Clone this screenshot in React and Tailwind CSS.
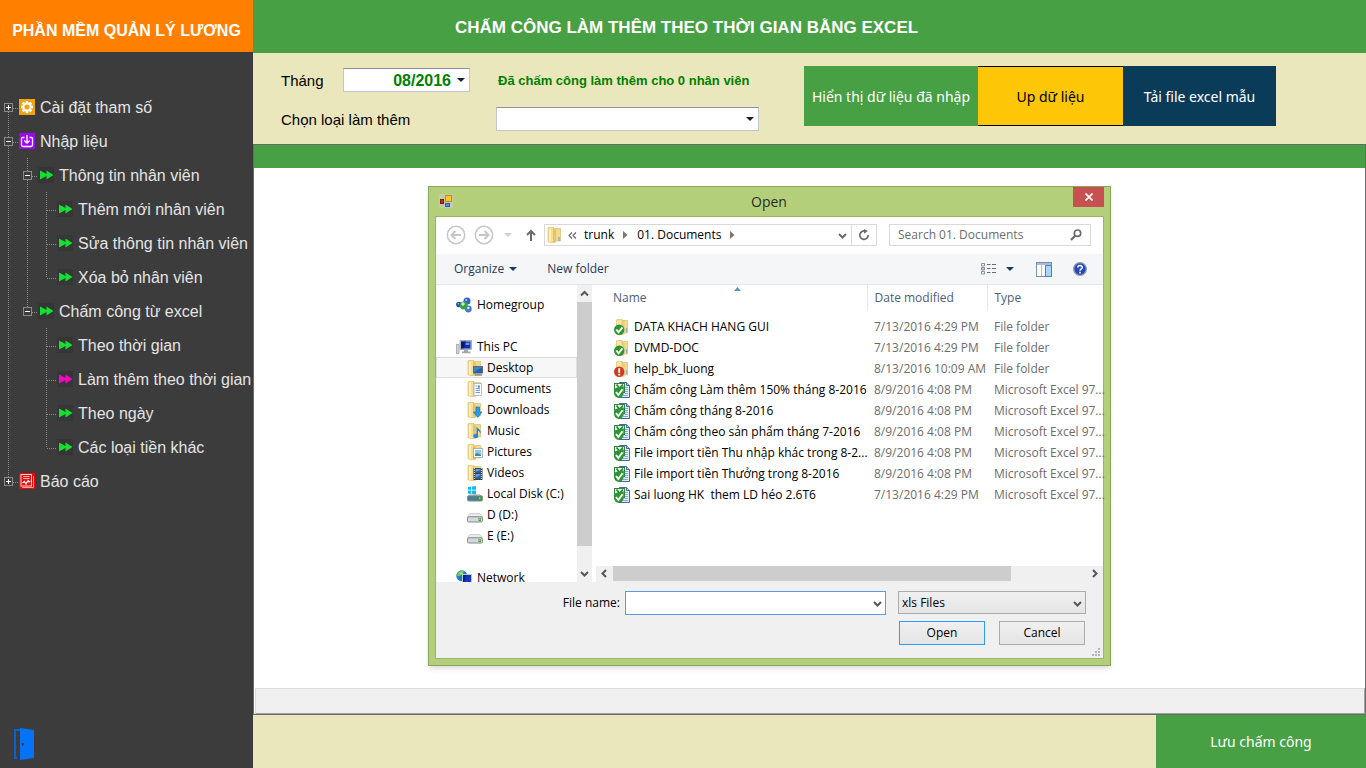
const C = "shrink-0";

/* ---------- sidebar ---------- */

function FastForward({ pink }) {
  return (
    <svg className={C} width="16" height="16" viewBox="0 0 16 16" aria-hidden="true">
      <rect width="16" height="16" fill="#363636" />
      <path d="M2 3.500 8.500 7 8.500 3.500 15.500 8 8.500 12.500 8.500 9 2 12.500z" fill={pink ? "#f908c4" : "#16e02f"} />
    </svg>
  );
}

function GearIcon() {
  return (
    <svg className={C} width="16" height="16" viewBox="0 0 16 16" aria-hidden="true">
      <rect width="16" height="16" fill="#f0a30a" />
      <g fill="#fff">
        <rect x="6.700" y="2" width="2.600" height="12" />
        <rect x="2" y="6.700" width="12" height="2.600" />
        <rect x="6.700" y="2" width="2.600" height="12" transform="rotate(45 8 8)" />
        <rect x="6.700" y="2" width="2.600" height="12" transform="rotate(-45 8 8)" />
        <circle cx="8" cy="8" r="4.600" />
      </g>
      <circle cx="8" cy="8" r="2.600" fill="#f0a30a" />
    </svg>
  );
}

function ImportIcon() {
  return (
    <svg className={C} width="16" height="16" viewBox="0 0 16 16" fill="none" stroke="#fff" strokeWidth="1.300" aria-hidden="true">
      <rect width="16" height="16" fill="#a004f5" stroke="none" />
      <path d="M5.500 4.500H3.500a1 1 0 0 0-1 1V12a1.500 1.500 0 0 0 1.500 1.500h8A1.500 1.500 0 0 0 13.500 12V5.500a1 1 0 0 0-1-1h-2" />
      <path d="M8 2v8M5.300 7.500 8 10.200l2.700-2.700" />
    </svg>
  );
}

function ReportIcon() {
  return (
    <svg className={C} width="16" height="16" viewBox="0 0 16 16" fill="none" aria-hidden="true">
      <rect width="16" height="16" fill="#ee0505" />
      <path d="M3 14.500h11.500V3" stroke="#f9a0a0" />
      <rect x="2" y="1.500" width="10.500" height="11.500" stroke="#ffd9d9" />
      <path d="M4 3.500h6.500M4 5.500h6.500" stroke="#ffb5b5" />
      <path d="m3.500 10 2-1.500L7 11l2-3.500 1 1.500 1.500-1" stroke="#fff" strokeWidth="1.200" />
    </svg>
  );
}

/* One 19px gutter cell of the tree: guide lines and an optional expander box. */
function Guide({ up, down, across, box }) {
  return (
    <svg className={C} width="19" height="34" viewBox="0 0 19 34" aria-hidden="true">
      <g stroke="#8a8a8a" strokeDasharray="1 1">
        {up && <path d="M8.500 0v18" />}
        {down && <path d="M8.500 18v16" />}
        {across && <path d="M9 18.500h10" />}
      </g>
      {box && (
        <g>
          <rect x="4.500" y="13.500" width="8" height="8" fill="#3c3c3c" stroke="#8a8a8a" />
          <path d={box === "plus" ? "M6 17.500h5M8.500 15v5" : "M6 17.500h5"} stroke="#fff" />
        </g>
      )}
    </svg>
  );
}

const line = { up: true, down: true };
const none = {};
const tee = { up: true, down: true, across: true };
const end = { up: true, across: true };

const MENU = [
  { label: "Cài đặt tham số", icon: "gear", guides: [{ down: true, across: true, box: "plus" }] },
  { label: "Nhập liệu", icon: "import", guides: [{ ...tee, box: "minus" }] },
  { label: "Thông tin nhân viên", guides: [line, { ...tee, box: "minus" }] },
  { label: "Thêm mới nhân viên", guides: [line, line, tee] },
  { label: "Sửa thông tin nhân viên", guides: [line, line, tee] },
  { label: "Xóa bỏ nhân viên", guides: [line, line, end] },
  { label: "Chấm công từ excel", guides: [line, { ...end, box: "minus" }] },
  { label: "Theo thời gian", guides: [line, none, tee] },
  { label: "Làm thêm theo thời gian", icon: "current", guides: [line, none, tee] },
  { label: "Theo ngày", guides: [line, none, tee] },
  { label: "Các loại tiền khác", guides: [line, none, end] },
  { label: "Báo cáo", icon: "report", guides: [{ ...end, box: "plus" }] },
];

function MenuIcon({ name }) {
  if (name === "gear") return <GearIcon />;
  if (name === "import") return <ImportIcon />;
  if (name === "report") return <ReportIcon />;
  return <FastForward pink={name === "current"} />;
}

function Sidebar() {
  return (
    <aside className="flex w-[253px] shrink-0 flex-col bg-[#3c3c3c] font-['Liberation_Sans',sans-serif]">
      <div className="flex h-[52px] items-center justify-center bg-[#ff8000] pt-[10px] text-[16px] font-bold whitespace-nowrap text-white">
        PHẦN MỀM QUẢN LÝ LƯƠNG
      </div>
      <nav className="mt-[38px] flex-1">
        <ul>
          {MENU.map((m) => (
            <li key={m.label} className="flex h-[34px] items-center">
              {m.guides.map((g, i) => (
                <Guide key={i} {...g} />
              ))}
              <a href="#" className="flex items-center gap-[5px] text-[16px] whitespace-nowrap text-[#e4e4e4]">
                <MenuIcon name={m.icon} />
                <span className="pt-[2px]">{m.label}</span>
              </a>
            </li>
          ))}
        </ul>
      </nav>
      <button aria-label="Thoát" className="mb-2 ml-[14px] w-5">
        <svg width="20" height="32" viewBox="0 0 20 32" aria-hidden="true">
          <path d="M6 2H1v28h2" fill="none" stroke="#0a62d0" strokeWidth="2" />
          <path d="M6 0l14 2v28L6 32z" fill="#0473f8" />
          <path d="M8 15h1.500v2.500H8z" fill="#20304c" />
        </svg>
      </button>
    </aside>
  );
}

/* ---------- small glyphs ---------- */

function Triangle({ className }) {
  return (
    <svg className={className} width="8" height="4" viewBox="0 0 8 4" aria-hidden="true">
      <path d="M0 0h8L4 4z" fill="currentColor" />
    </svg>
  );
}

const CHEVRONS = {
  up: "M1 6.500 4.500 3 8 6.500",
  down: "M1 3 4.500 6.500 8 3",
  left: "M6 1 2.500 4.500 6 8",
  right: "M3 1l3.500 3.500L3 8",
};

function Chevron({ dir, className }) {
  return (
    <svg className={className} width="9" height="9" viewBox="0 0 9 9" aria-hidden="true">
      <path d={CHEVRONS[dir]} fill="none" stroke="currentColor" strokeWidth="2" />
    </svg>
  );
}

function FolderBase() {
  return (
    <g>
      <path d="M6 1.500h7.500V14H6z" fill="#f3d98b" stroke="#d9b65c" strokeWidth=".6" />
      <path d="M1 .8 6.500 0v16L1 14.800z" fill="#f6dd92" stroke="#d8b45a" strokeWidth=".6" />
      <path d="M2 1.500 4 1.200v13.600l-2-.4z" fill="#fcf0c0" />
      <path d="M6.500 1.500 9 3v12.500L6.500 16z" fill="#e8c469" />
    </g>
  );
}

function PlaceIcon({ kind }) {
  return (
    <svg className={C} width="16" height="16" viewBox="0 0 16 16" aria-hidden="true">
      {["desktop", "documents", "downloads", "music", "pictures", "videos"].includes(kind) && <FolderBase />}
      {kind === "desktop" && (
        <g>
          <rect x="6.500" y="6.500" width="9" height="6.500" fill="#3f84cf" stroke="#5d6b7c" />
          <path d="m7 12 8-5v6H7z" fill="#2862ab" />
          <path d="M8 14.500h7v1H8z" fill="#4b5663" />
        </g>
      )}
      {kind === "documents" && (
        <g>
          <rect x="7" y="2.500" width="7.500" height="12" fill="#fff" stroke="#a9b2bd" strokeWidth=".8" />
          <path d="M8.500 5h2M8.500 7.500h4.500M8.500 9.500h4.500M8.500 11.500h4.500" stroke="#6d9fd8" />
          <path d="M11 4.500h2v2h-2z" fill="#4d88cd" />
        </g>
      )}
      {kind === "downloads" && <path d="M9 5h3.500v5H15l-4.200 5.500L6.500 10H9z" fill="#2a9ce8" stroke="#1a72b8" strokeWidth=".7" />}
      {kind === "music" && (
        <g fill="#2b86d1">
          <path d="M9.500 3c.3 2.500 5.500 3.500 4 8-.3-2-1.500-2.800-2.500-3V13H9.500z" />
          <ellipse cx="8.800" cy="13" rx="2.500" ry="2.200" />
        </g>
      )}
      {kind === "pictures" && (
        <g>
          <rect x="6.500" y="4.500" width="9" height="9" fill="#fff" stroke="#9aa5b0" strokeWidth=".8" />
          <path d="M8 6h6v6H8z" fill="#8fc6ee" />
          <path d="m8 10 2.500-1 3.500 2v1H8z" fill="#3f8e84" />
        </g>
      )}
      {kind === "videos" && (
        <g>
          <rect x="6.500" y="3" width="9" height="12" fill="#3e4044" />
          <path d="M8.500 4h5v4h-5zM8.500 9h5v5h-5z" fill="#5ba2dd" />
          <path d="m8.500 13 5-3v4h-5zM8.500 7l5-2v3h-5z" fill="#2a5d92" />
          <path d="M7.500 3v12M14.500 3v12" stroke="#c5c8cc" strokeDasharray="1 1" />
        </g>
      )}
      {kind === "homegroup" && (
        <g>
          <circle cx="11" cy="4" r="3.500" fill="#3560c4" />
          <circle cx="12.300" cy="12" r="3.400" fill="#4a78ce" />
          <circle cx="2.800" cy="7.500" r="2.700" fill="#2750b5" />
          <circle cx="7.800" cy="8.500" r="4" fill="#39a04a" />
          <circle cx="7" cy="7" r="1.700" fill="#c9efc4" />
          <circle cx="10.300" cy="3" r="1.100" fill="#b5cdf5" />
          <circle cx="12.300" cy="11" r="1.200" fill="#d5e4fb" />
          <circle cx="2.300" cy="6.800" r=".8" fill="#a7c0f0" />
        </g>
      )}
      {kind === "pc" && (
        <g>
          <path d="M.5 5.500h2.500v9H.5z" fill="#d6dade" stroke="#8a9199" strokeWidth=".7" />
          <rect x="4" y="1.500" width="11.500" height="9" fill="#c9ccd0" stroke="#9096a0" strokeWidth=".7" />
          <path d="M5 2.500h9.500v7H5z" fill="#0c2fb4" />
          <path d="M5 2.500h5L7.500 9.500H5z" fill="#081c74" />
          <path d="M9.500 3.500h4v2.500h-4z" fill="#5f93f2" />
          <path d="M8 10.500h4v2H8zM6 12.500h8.500v1.800H6z" fill="#a2a7ad" />
        </g>
      )}
      {kind === "network" && (
        <g>
          <circle cx="5.800" cy="5.800" r="5.500" fill="#1b7fc2" />
          <path d="M2 2.500C4 1 6 .5 8 1L6.500 4 3 6.500 1 5.500zM6 7l3-2 1.500 3L7 11z" fill="#6cd04c" />
          <path d="M4 4c1-1 2-1 3-.5" stroke="#cdf5ff" fill="none" />
          <rect x="6.500" y="4.500" width="9" height="8" fill="#1337b9" stroke="#c2c6cb" />
          <path d="M7 5h3.500L8 12H7z" fill="#0a1f86" />
          <path d="M9 13.500h5v1.500H9z" fill="#a2a7ad" />
        </g>
      )}
      {["local", "disk"].includes(kind) && (
        <g>
          <path d={kind === "disk" ? "M3 6.500h10l2.500 3H.5z" : "M3 8.500h10l2.500 2H.5z"} fill="#e9ebec" stroke="#b7babd" strokeWidth=".6" />
          <rect x=".5" y="9.800" width="15" height="5.200" rx="1.300" fill={kind === "disk" ? "#d6d8da" : "#4d7d8f"} stroke="#868a8e" />
          <path d="M11.500 11h2.500v3h-2.500z" fill="#3aa52c" />
          <path d="M12.300 11.500h1v1.500h-1z" fill="#b8f58e" />
        </g>
      )}
      {kind === "local" && <path d="M1 1 4.300.5v3.300H1zM5 .4 9 0v3.800H5zM1 4.500h3.300V8L1 7.500zM5 4.500h4V8.500L5 8z" fill="#18b9f0" />}
    </svg>
  );
}

function FileIcon({ kind }) {
  if (kind === "excel") {
    return (
      <svg className={C} width="16" height="16" viewBox="0 0 16 16" aria-hidden="true">
        <path d="M5.500.5h7l3 3v12h-11z" fill="#e4eefb" stroke="#3f66a6" />
        <path d="M12.500.5v3h3" fill="#b5cdee" stroke="#3f66a6" />
        <path d="M10.500 5.500h3.500M10.500 7.500h3.500M10.500 9.500h3.500M10.500 11.500h3.500M9 13.500h5" stroke="#87a7d6" />
        <rect x=".5" y="1.500" width="10" height="9" fill="#eef8ee" stroke="#2e8440" />
        <path d="m2.500 2.500 4 5M9 2.500 5 7" stroke="#2d8438" strokeWidth="1.800" />
        <path d="M0 7c2-1.500 7-2.500 9.800-2.500V10c0 3.500-2.300 5.800-5 5.800S0 14 0 11z" fill="#2c9430" />
        <path d="m2 10 2.300 3L8.500 7.200" fill="none" stroke="#fff" strokeWidth="1.900" />
      </svg>
    );
  }
  return (
    <svg className={C} width="16" height="16" viewBox="0 0 16 16" aria-hidden="true">
      <path d="M8 1.500h5.500V14H8z" fill="#f3d98b" stroke="#d9b65c" strokeWidth=".6" />
      <path d="M2.500.8 8 0v16l-5.500-1.200z" fill="#f9e5a5" stroke="#d8b45a" strokeWidth=".6" />
      <path d="M8 1.500 10.500 3v12.500L8 16z" fill="#edcc78" />
      <path d="M12 9h1.200v4H12z" fill="#7db4e2" />
      <circle cx="5.200" cy="10.700" r="5.200" fill={kind === "alert" ? "#cf3a20" : "#2c9430"} />
      {kind === "alert" ? (
        <path d="M5.200 7.200v4.500M5.200 12.700v1.800" stroke="#fff" strokeWidth="1.900" />
      ) : (
        <path d="m2.300 10.500 2.200 2.800 4-5" fill="none" stroke="#fff" strokeWidth="1.900" />
      )}
    </svg>
  );
}

/* ---------- open dialog ---------- */

const PLACES = [
  { label: "Homegroup", kind: "homegroup" },
  null,
  { label: "This PC", kind: "pc" },
  { label: "Desktop", kind: "desktop", child: true, selected: true },
  { label: "Documents", kind: "documents", child: true },
  { label: "Downloads", kind: "downloads", child: true },
  { label: "Music", kind: "music", child: true },
  { label: "Pictures", kind: "pictures", child: true },
  { label: "Videos", kind: "videos", child: true },
  { label: "Local Disk (C:)", kind: "local", child: true },
  { label: "D (D:)", kind: "disk", child: true },
  { label: "E (E:)", kind: "disk", child: true },
  null,
  { label: "Network", kind: "network" },
];

const XLS = "Microsoft Excel 97...";
const FILES = [
  ["folder", "DATA KHACH HANG GUI", "7/13/2016 4:29 PM", "File folder"],
  ["folder", "DVMD-DOC", "7/13/2016 4:29 PM", "File folder"],
  ["alert", "help_bk_luong", "8/13/2016 10:09 AM", "File folder"],
  ["excel", "Chấm công Làm thêm 150% tháng 8-2016", "8/9/2016 4:08 PM", XLS],
  ["excel", "Chấm công tháng 8-2016", "8/9/2016 4:08 PM", XLS],
  ["excel", "Chấm công theo sản phẩm tháng 7-2016", "8/9/2016 4:08 PM", XLS],
  ["excel", "File import tiền Thu nhập khác trong 8-2...", "8/9/2016 4:08 PM", XLS],
  ["excel", "File import tiền Thưởng trong 8-2016", "8/9/2016 4:08 PM", XLS],
  ["excel", "Sai luong HK  them LD héo 2.6T6", "7/13/2016 4:29 PM", XLS],
];

function RoundArrow({ flip, label }) {
  return (
    <button aria-label={label} className="shrink-0">
      <svg width="20" height="20" viewBox="0 0 20 20" fill="none" stroke="#c6c6c6" aria-hidden="true">
        <circle cx="10" cy="10" r="8.700" strokeWidth="1.500" />
        <path d={flip ? "M5 10h9M10.500 6l4 4-4 4" : "M15 10H6M9.500 6l-4 4 4 4"} strokeWidth="2" />
      </svg>
    </button>
  );
}

function Crumb() {
  return (
    <svg width="5" height="8" viewBox="0 0 5 8" aria-hidden="true">
      <path d="M0 0l4.500 4L0 8z" fill="#777" />
    </svg>
  );
}

function NavBar() {
  return (
    <div className="flex h-[37px] items-center bg-white pr-3 pb-px pl-[10px]">
      <RoundArrow label="Back" />
      <span className="w-2" />
      <RoundArrow flip label="Forward" />
      <button aria-label="Recent locations" className="ml-[10px] text-[#cfcfcf]">
        <Triangle />
      </button>
      <button aria-label="Up" className="ml-[14px]">
        <svg width="10" height="12" viewBox="0 0 10 12" fill="none" stroke="#6b6b6b" strokeWidth="2" aria-hidden="true">
          <path d="M5 12V2M1 6l4-4 4 4" />
        </svg>
      </button>
      <div className="ml-2 flex h-[22px] flex-1 items-center border border-[#d9d9d9]">
        <svg className="ml-[2px] shrink-0" width="15" height="16" viewBox="0 0 15 16" aria-hidden="true">
          <FolderBase />
          <path d="M11.500 10h1v4h-1z" fill="#5a9fdc" />
        </svg>
        <svg className="ml-[6px]" width="9" height="7" viewBox="0 0 9 7" fill="none" stroke="#666" strokeWidth="1.200" aria-hidden="true">
          <path d="M4 .5 1 3.500l3 3M8 .5 5 3.500l3 3" />
        </svg>
        <button className="mr-[9px] ml-[7px]">trunk</button>
        <Crumb />
        <button className="mr-[9px] ml-[9px] whitespace-nowrap">01. Documents</button>
        <Crumb />
        <span className="flex-1" />
        <button aria-label="Previous locations" className="mr-1 text-[#6b6b6b]">
          <Chevron dir="down" />
        </button>
        <button aria-label="Refresh" className="flex h-full w-[25px] items-center justify-center border-l border-[#d9d9d9]">
          <svg width="12" height="12" viewBox="0 0 12 12" fill="none" aria-hidden="true">
            <path d="M7.500 2.200A4.200 4.200 0 1 0 10.200 6" stroke="#6b6b6b" strokeWidth="1.700" />
            <path d="M6 0v4.800L9.800 2z" fill="#6b6b6b" />
          </svg>
        </button>
      </div>
      <div className="ml-3 flex h-[22px] w-[202px] items-center border border-[#d9d9d9] px-2">
        <input aria-label="Search 01. Documents" placeholder="Search 01. Documents" className="min-w-0 flex-1 outline-none placeholder:text-[#6d6d6d]" />
        <svg width="12" height="12" viewBox="0 0 12 12" fill="none" stroke="#6b6b6b" aria-hidden="true">
          <circle cx="7.500" cy="4.200" r="3.200" strokeWidth="1.700" />
          <path d="M5.200 6.800 1 11" strokeWidth="2.200" />
        </svg>
      </div>
    </div>
  );
}

function ToolBar() {
  return (
    <div className="flex h-[31px] items-center border-b border-[#e3e8ee] bg-[#f5f6f7] pr-4 pl-[18px] text-[#1e395b]">
      <button className="flex items-center gap-[5px]">
        Organize <Triangle />
      </button>
      <button className="ml-[30px]">New folder</button>
      <span className="flex-1" />
      <button aria-label="Change your view" className="flex items-center gap-[10px]">
        <svg width="15" height="12" viewBox="0 0 15 12" fill="none" aria-hidden="true">
          <path d="M.5.500h3v2.500h-3zM.5 4.500h3V7h-3zM.5 8.500h3V11h-3z" stroke="#8492a4" />
          <path d="M6 1.500h3.500M11 1.500h4M6 5.500h3.500M11 5.500h4M6 9.500h3.500M11 9.500h4" stroke="#5d6f86" />
          <path d="M1.500 5.500h1v1h-1z" fill="#d2402e" />
        </svg>
        <Triangle />
      </button>
      <button aria-label="Show the preview pane" className="ml-[22px]">
        <svg width="16" height="15" viewBox="0 0 16 15" aria-hidden="true">
          <rect x=".5" y=".5" width="15" height="14" fill="#fff" stroke="#7891ad" />
          <path d="M1 1h14v2H1z" fill="#a9bed4" />
          <path d="M5.500 3v11" stroke="#a9bed4" />
          <path d="M9.500 3.500h6v11h-6z" fill="#a9d6fa" stroke="#3c86c8" />
        </svg>
      </button>
      <button aria-label="Help" className="ml-[21px]">
        <svg width="14" height="14" viewBox="0 0 14 14" fill="none" aria-hidden="true">
          <circle cx="7" cy="7" r="6.300" fill="#2449b8" stroke="#8d99ac" strokeWidth="1.300" />
          <path d="M4.800 5.500C4.800 3 9.300 3 9.300 5.400 9.300 7 7 6.800 7 8.700M7 9.800v1.600" stroke="#fff" strokeWidth="1.500" />
        </svg>
      </button>
    </div>
  );
}

function Places() {
  return (
    <ul className="min-w-0 flex-1 overflow-hidden pt-[9px]">
      {PLACES.map((p, i) =>
        p ? (
          <li key={p.label} className={p.selected ? "border border-[#dedede] bg-[#f7f7f7]" : "border border-transparent"}>
            <a href="#" className={`flex h-[19px] items-center whitespace-nowrap ${p.child ? "gap-1 pl-[30px]" : "gap-[5px] pl-[19px]"}`}>
              <PlaceIcon kind={p.kind} />
              {p.label}
            </a>
          </li>
        ) : (
          <li key={i} className="h-[21px]" />
        )
      )}
    </ul>
  );
}

function FileTable() {
  return (
    <table className="w-full table-fixed border-collapse text-left">
      <colgroup>
        <col className="w-[271px]" />
        <col className="w-[120px]" />
        <col />
      </colgroup>
      <thead className="text-[#4c607a]">
        <tr className="h-[26px]">
          <th className="relative border-r border-[#e3e8ee] p-0 pl-[17px] font-normal">
            Name
            <svg className="absolute top-[2px] left-[138px]" width="7" height="4" viewBox="0 0 7 4" aria-hidden="true">
              <path d="M0 4 3.500 0 7 4z" fill="#5c93b8" />
            </svg>
          </th>
          <th className="border-r border-[#e3e8ee] p-0 pl-[7px] font-normal">Date modified</th>
          <th className="p-0 pl-[7px] font-normal">Type</th>
        </tr>
        <tr className="h-[5px]" />
      </thead>
      <tbody>
        {FILES.map(([kind, name, date, type]) => (
          <tr key={name} className="h-[21px] whitespace-nowrap text-[#6d6d6d]">
            <td className="p-0 pl-[18px] text-black">
              <span className="flex items-center gap-1 whitespace-pre">
                <FileIcon kind={kind} />
                {name}
              </span>
            </td>
            <td className="p-0 pl-[7px]">{date}</td>
            <td className="p-0 pl-[7px]">{type}</td>
          </tr>
        ))}
      </tbody>
    </table>
  );
}

function OpenDialog() {
  return (
    <section
      role="dialog"
      aria-labelledby="dialog-title"
      className="absolute top-[18px] left-[174px] w-[683px] border border-[#8ba35b] bg-[#b4cf79] px-[6px] pb-[6px] font-['Open_Sans',sans-serif] text-[12px] leading-4 text-black shadow-md"
    >
      <header className="flex h-[29px] items-start justify-between">
        <svg className="mt-[7px] ml-1 shrink-0" width="14" height="14" viewBox="0 0 14 14" aria-hidden="true">
          <rect width="14" height="14" fill="#c4cba6" />
          <rect x="1.500" y="5.500" width="3" height="4" fill="#c22a1c" stroke="#7e150d" />
          <rect x="6.500" y="1.500" width="6" height="6" fill="#fbc531" stroke="#c78b12" />
          <rect x="6.500" y="9.500" width="4" height="3" fill="#4f8be0" stroke="#2e61b2" />
        </svg>
        <h2 id="dialog-title" className="pt-[5px] pl-3 text-[14px] leading-5 text-[#2b2b2b]">
          Open
        </h2>
        <button aria-label="Close" className="flex h-5 w-[31px] items-center justify-center bg-[#c75050]">
          <svg width="8" height="8" viewBox="0 0 8 8" stroke="#fff" strokeWidth="1.700" aria-hidden="true">
            <path d="M.5.500l7 7M7.500.500l-7 7" />
          </svg>
        </button>
      </header>

      <div className="border border-[#9ab563] bg-[#f0f0f0]">
        <NavBar />
        <ToolBar />
        <div className="flex h-[297px] bg-white">
          <div className="flex w-[156px] shrink-0">
            <Places />
            <div className="flex w-[15px] shrink-0 flex-col items-center bg-[#f0f0f0] text-[#555]">
              <button aria-label="Scroll up" className="flex h-[17px] items-center">
                <Chevron dir="up" />
              </button>
              <div className="h-[244px] w-full bg-[#cdcdcd]" />
              <span className="flex-1" />
              <button aria-label="Scroll down" className="flex h-[17px] items-center">
                <Chevron dir="down" />
              </button>
            </div>
          </div>
          <div className="ml-1 flex min-w-0 flex-1 flex-col">
            <div className="flex-1">
              <FileTable />
            </div>
            <div className="flex h-[16px] items-start bg-[#f0f0f0] text-[#555]">
              <button aria-label="Scroll left" className="flex h-[15px] w-[17px] items-center justify-center">
                <Chevron dir="left" />
              </button>
              <div className="h-[15px] w-[398px] bg-[#cdcdcd]" />
              <span className="flex-1" />
              <button aria-label="Scroll right" className="flex h-[15px] w-[17px] items-center justify-center">
                <Chevron dir="right" />
              </button>
            </div>
          </div>
        </div>

        <footer className="relative flex flex-col gap-[6px] pt-[9px] pr-[17px] pb-[13px]">
          <div className="flex items-center justify-end">
            <label htmlFor="file-name" className="mr-[5px]">
              File name:
            </label>
            <div className="flex h-6 w-[261px] items-center border border-[#569de5] bg-white pr-[3px]">
              <input id="file-name" className="min-w-0 flex-1 px-1 outline-none" />
              <button aria-label="Recent file names" className="text-[#555]">
                <Chevron dir="down" />
              </button>
            </div>
            <div className="ml-3 grid h-6 w-[188px] items-start">
              <select aria-label="File type" className="col-start-1 row-start-1 h-[23px] w-full appearance-none border border-[#acacac] bg-linear-to-b from-[#f0f0f0] to-[#e5e5e5] pl-[3px]">
                <option>xls Files</option>
              </select>
              <Chevron dir="down" className="pointer-events-none col-start-1 row-start-1 mr-1 self-center justify-self-end text-[#555]" />
            </div>
          </div>
          <div className="flex justify-end gap-[14px] pr-px">
            <button className="h-6 w-[86px] border border-[#3399ff] bg-linear-to-b from-[#f0f0f0] to-[#e5e5e5]">Open</button>
            <button className="h-6 w-[86px] border border-[#acacac] bg-linear-to-b from-[#f0f0f0] to-[#e5e5e5]">Cancel</button>
          </div>
          <svg className="absolute right-[3px] bottom-[2px]" width="8" height="8" viewBox="0 0 8 8" fill="#b5b5b5" aria-hidden="true">
            <path d="M6 0h2v2H6zM3 3h2v2H3zM6 3h2v2H6zM0 6h2v2H0zM3 6h2v2H3zM6 6h2v2H6z" />
          </svg>
        </footer>
      </div>
    </section>
  );
}

/* ---------- main area ---------- */

function Filters() {
  return (
    <div className="flex h-[91px] shrink-0 items-start bg-[#ebe7bd] pt-[13px] pl-7">
      <div className="flex w-[523px] shrink-0 flex-col gap-[15px] pt-[2px] font-['Liberation_Sans',sans-serif] text-[15px] text-black">
        <div className="flex h-6 items-center whitespace-nowrap">
          <label htmlFor="month" className="w-[62px] pt-[2px]">
            Tháng
          </label>
          <div className="flex h-6 w-[127px] items-center border border-[#c3c5d0] border-t-[#8f919b] bg-white pr-1">
            <input id="month" defaultValue="08/2016" className="min-w-0 flex-1 pt-[2px] text-right text-[16px] font-bold text-[#008000] outline-none" />
            <button aria-label="Chọn tháng" className="ml-[6px] text-[#1c1c30]">
              <Triangle />
            </button>
          </div>
          <p className="ml-7 pt-[2px] text-[13px] font-bold text-[#008000]">Đã chấm công làm thêm cho 0 nhân viên</p>
        </div>
        <div className="flex h-6 items-center">
          <label htmlFor="kind" className="w-[215px] pt-[2px]">
            Chọn loại làm thêm
          </label>
          <div className="grid w-[263px] items-center">
            <select id="kind" className="col-start-1 row-start-1 h-6 w-full appearance-none border border-[#c3c5d0] border-t-[#8f919b] bg-white pl-1">
              <option></option>
            </select>
            <Triangle className="pointer-events-none col-start-1 row-start-1 mr-[5px] justify-self-end text-[#1c1c30]" />
          </div>
        </div>
      </div>
      <div className="flex h-[60px] font-['Noto_Sans',sans-serif] text-[14px] whitespace-nowrap">
        <button className="w-[174px] bg-[#48a044] text-white">Hiển thị dữ liệu đã nhập</button>
        <button className="w-[145px] border-y border-black bg-[#fdc707] text-black">Up dữ liệu</button>
        <button className="w-[153px] bg-[#0a3c5a] text-white">Tải file excel mẫu</button>
      </div>
    </div>
  );
}

export default function App() {
  return (
    <div className="flex min-h-screen">
      <Sidebar />
      <main className="flex min-w-0 flex-1 flex-col">
        <h1 className="flex h-[53px] shrink-0 items-center bg-[#48a044] pt-[2px] pl-[202px] font-['Liberation_Sans',sans-serif] text-[17px] font-bold whitespace-nowrap text-white">
          CHẤM CÔNG LÀM THÊM THEO THỜI GIAN BẰNG EXCEL
        </h1>
        <Filters />
        <div className="flex flex-1 flex-col border border-[#6a6a6a] bg-white">
          <div className="h-[23px] bg-[#48a044]" />
          <div className="relative min-h-[500px] flex-1">
            <OpenDialog />
          </div>
          <div className="ml-px h-[26px] border border-[#dcdcdc] border-r-[#a0a0a0] border-b-[#a0a0a0] bg-[#f0f0f0]" />
        </div>
        <div className="flex h-[53px] shrink-0 justify-end bg-[#ebe7bd]">
          <button className="w-[210px] bg-[#48a044] font-['Noto_Sans',sans-serif] text-[14px] text-white">Lưu chấm công</button>
        </div>
      </main>
    </div>
  );
}
